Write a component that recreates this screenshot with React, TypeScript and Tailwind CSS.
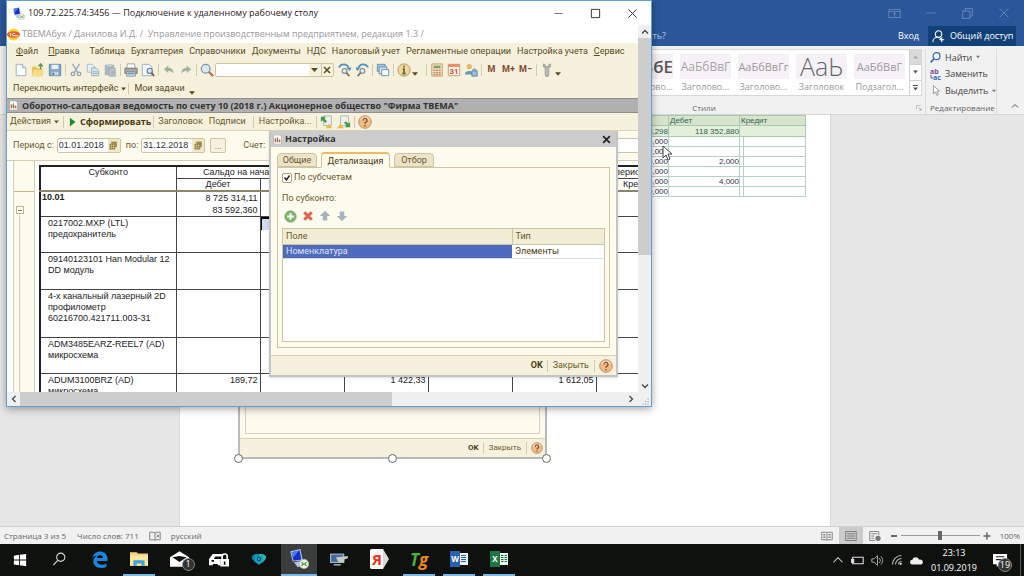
import type { ReactNode } from 'react';
import clsx from 'clsx';

const UI_FONT = "font-['Open_Sans','Noto_Sans',sans-serif]";
const ONEC_FONT = "font-['Roboto','Noto_Sans',sans-serif]";
const SHEET_FONT = "font-['Liberation_Sans',Arial,sans-serif]";

const MENU = ['Таблица', 'Бухгалтерия', 'Справочники', 'Документы', 'НДС', 'Налоговый учет', 'Регламентные операции', 'Настройка учета'];

const STYLES = [
  { sample: 'АаБбВвГ', label: 'Заголово...', look: 'text-[12px] text-[#a5a5a5]' },
  { sample: 'АаБбВвГг', label: 'Заголово...', look: 'text-[11px] text-[#999]' },
  { sample: 'АаЬ', label: 'Заголовок', look: 'text-[25px] text-[#666] font-light' },
  { sample: 'АаБбВвГ', label: 'Подзагол...', look: 'text-[11px] text-[#999]' },
];

const WORD_ROWS = [
  ['5,000', '', ''],
  ['2,000', '', ''],
  ['5,000', '2,000', ''],
  ['4,000', '', ''],
  ['6,000', '4,000', ''],
  ['0,000', '', ''],
];

const Icon = ({ children, size = 14, className }: { children: ReactNode; size?: number; className?: string }) => (
  <svg width={size} height={size} viewBox="0 0 16 16" fill="none" className={clsx('shrink-0', className)} aria-hidden="true">
    {children}
  </svg>
);

const RdpIcon = ({ size = 13 }: { size?: number }) => (
  <Icon size={size}>
    <path d="M1 2l8-2 2 9-8 1z" fill="#c8d4ea" />
    <path d="M2 2.600l6.400-1.600 1.600 7.400-6.400 1z" fill="#1430c8" />
    <path d="M2 2.600l6.400-1.600L3 7z" fill="#4a7cf0" />
    <path d="M4 10.500l6-1 3 3-6 2z" fill="#b9c4d8" />
    <circle cx="12" cy="12" r="3.800" fill="#e8efe4" stroke="#a9b3a5" strokeWidth=".5" />
    <path d="M10 13.500l1.500-1.500-1.500-1.500M14 10.500L12.500 12l1.500 1.500" stroke="#3f9b35" strokeWidth="1" />
  </Icon>
);

const OneCIcon = () => (
  <Icon size={13}>
    <circle cx="8" cy="8" r="7.500" fill="#fbd42c" />
    <path d="M0 8a8 4 0 0 1 16 0 8 4 0 0 1-16 0" fill="#ef5a28" />
    <path d="M3 7.500l1.500-1V10M10 7a2 1.600 0 1 0 0 2.500h4" stroke="#fff" strokeWidth="1.200" />
  </Icon>
);

const ReportIcon = () => (
  <Icon size={9}>
    <path d="M1 0h11l3 3v13H1z" fill="#fff" stroke="#999" />
    <path d="M3 6h3v7H3z" fill="#e2574c" />
    <path d="M7 4h2v9H7z" fill="#4da14d" />
    <path d="M10 8h3v5h-3z" fill="#e2574c" />
  </Icon>
);

const HelpIcon = ({ size = 14 }: { size?: number }) => (
  <Icon size={size}>
    <circle cx="8" cy="8" r="7.200" fill="#f4bd80" stroke="#a98b73" />
    <path d="M2.500 5.500a6 6 0 0 1 11 0z" fill="#fbe0bf" />
    <path d="M5.700 6.200a2.300 2.300 0 1 1 3.300 2C8.200 8.600 8 9 8 9.900M8 11.300V13" stroke="#8b4a2b" strokeWidth="1.600" />
  </Icon>
);

const NewIcon = () => (
  <Icon>
    <path d="M2.500 1.500h7l4 4v9h-11z" fill="#fdfefe" stroke="#8fa9bb" />
    <path d="M9.500 1.500v4h4" fill="#dce9f1" stroke="#8fa9bb" />
  </Icon>
);
const OpenIcon = () => (
  <Icon>
    <path d="M1 4h5l1 2h6v9H1z" fill="#f0c25c" />
    <path d="M1 15l2-7h12l-2 7z" fill="#f9dc8a" />
    <path d="M11 7V2M8.500 4L11 1l2.500 3" stroke="#539b4a" strokeWidth="1.500" />
  </Icon>
);
const SaveIcon = () => (
  <Icon>
    <path d="M1.500 1.500h13v13h-13z" fill="#7fa5c2" stroke="#5f87a5" />
    <path d="M4 2h8v5H4z" fill="#e6f0f6" />
    <path d="M4 10h8v4H4z" fill="#c8d8e2" />
    <path d="M5 11h2v3H5z" fill="#567a95" />
  </Icon>
);
const CutIcon = () => (
  <Icon>
    <path d="M4 1l6 10M12 1L6 11" stroke="#9fb2bf" strokeWidth="1.800" />
    <circle cx="4.500" cy="12.500" r="2" stroke="#8fa5b4" strokeWidth="1.500" />
    <circle cx="11.500" cy="12.500" r="2" stroke="#8fa5b4" strokeWidth="1.500" />
  </Icon>
);
const CopyIcon = () => (
  <Icon>
    <path d="M1.500 1.500h6l2 2v7h-8z" fill="#e8eff3" stroke="#a3b8c6" />
    <path d="M6.500 5.500h5l3 3v6h-8z" fill="#d5e2ea" stroke="#93abbb" />
    <path d="M8 10h5M8 12h5" stroke="#93abbb" />
  </Icon>
);
const PasteIcon = () => (
  <Icon>
    <path d="M2 2h11v12H2z" fill="#a9b7bd" />
    <path d="M5 1h5v3H5z" fill="#c8d2d6" />
    <path d="M7 6h7v9H7z" fill="#bfcad0" stroke="#98a9b2" />
    <path d="M9 9h4M9 11h4M9 13h4" stroke="#98a9b2" />
  </Icon>
);
const PrintIcon = () => (
  <Icon>
    <path d="M4 1h8l1 5H3z" fill="#fff" stroke="#999" />
    <path d="M1 6h14v6H1z" fill="#a6a6a6" stroke="#777" />
    <path d="M3 10h10v5H3z" fill="#e3e3e3" stroke="#888" />
    <path d="M4 12h8" stroke="#5c9ec9" strokeWidth="2" />
  </Icon>
);
const PreviewIcon = () => (
  <Icon>
    <path d="M1.500 1.500h8l3 3v10h-11z" fill="#f3f8fa" stroke="#8fa9bb" />
    <circle cx="10" cy="9" r="3" fill="#d2e6f2" stroke="#66859a" strokeWidth="1.300" />
    <path d="M12 11l3 4" stroke="#8b5a41" strokeWidth="2" />
  </Icon>
);
const UndoIcon = ({ flip }: { flip?: boolean }) => (
  <Icon size={12} className={clsx(flip && '-scale-x-100')}>
    <path d="M1 7l6-5v3c5 0 7 3 7 8-2-3-4-4-7-4v3z" fill="#a4b1a1" />
  </Icon>
);
const SearchIcon = () => (
  <Icon>
    <circle cx="6.500" cy="6.500" r="5" fill="#d7e9f5" stroke="#8296a5" strokeWidth="1.500" />
    <path d="M10 10l5 5" stroke="#b4714c" strokeWidth="2.500" />
  </Icon>
);
const FindNextIcon = ({ flip }: { flip?: boolean }) => (
  <Icon className={clsx(flip && '-scale-x-100')}>
    <path d="M1 5c3-5 9-4 11 0" stroke="#5590b8" strokeWidth="2" />
    <path d="M9.500 5h6l-2 4z" fill="#5590b8" />
    <circle cx="7.500" cy="9" r="2.800" fill="#dcebf4" stroke="#71848f" strokeWidth="1.200" />
    <path d="M9.500 11l3.500 4" stroke="#8b6656" strokeWidth="1.800" />
  </Icon>
);
const WindowsIcon = () => (
  <Icon>
    <path d="M1.500 1.500h9v8h-9z" fill="#a7c8df" stroke="#5d8aab" />
    <path d="M3.500 4.500h9v8h-9z" fill="#cfe2ee" stroke="#5d8aab" />
    <path d="M6.500 7.500h8v7h-8z" fill="#f7fbfd" stroke="#5d8aab" />
  </Icon>
);
const InfoIcon = () => (
  <Icon>
    <circle cx="8" cy="8" r="7" fill="#f3d79a" stroke="#b08a5b" />
    <path d="M8 3v2.200M6.500 7H8v5M6 12h4" stroke="#597433" strokeWidth="2" />
  </Icon>
);
const CalcIcon = () => (
  <Icon>
    <path d="M2 1h12v14H2z" fill="#f3dcb8" stroke="#c79a6c" />
    <path d="M4 3h8v3H4z" fill="#7fa374" />
    <path d="M4 8.500h8M4 11h8M4 13.300h8" stroke="#b5835c" strokeWidth="1.500" strokeDasharray="2 1" />
  </Icon>
);
const CalendarIcon = () => (
  <svg width={14} height={14} viewBox="0 0 16 16" aria-hidden="true">
    <path d="M1.500 1.500h13v13h-13z" fill="#fff8f0" stroke="#d18b70" />
    <path d="M1.500 1.500h13v3h-13z" fill="#ec8a61" />
    <text x="8" y="13" textAnchor="middle" fontSize="9" fontWeight="bold" fill="#d8452a">31</text>
  </svg>
);
const UsersIcon = () => (
  <Icon>
    <circle cx="6" cy="4" r="3" fill="#e6b968" />
    <path d="M1 13c0-5 10-5 10 0z" fill="#6998bd" />
    <path d="M9 9h6v6H9z" fill="#9dbfd8" stroke="#54809e" />
    <path d="M10.500 9V7h3v2" stroke="#54809e" />
  </Icon>
);
const WrenchIcon = () => (
  <Icon>
    <path d="M4 1v3.500l2 1.500v8a2 1.500 0 0 0 4 0V6l2-1.500V1l-2 1v2H6V2z" fill="#b9b9b4" stroke="#8d8d89" strokeWidth=".8" />
  </Icon>
);
const SettingsFileIcon = ({ flip }: { flip?: boolean }) => (
  <Icon>
    <path d="M4 1h9v11H4z" fill="#edf1e9" stroke="#a9b5a9" />
    <path d={flip ? 'M15 14H9l2-2-3-3 2-2 3 3 2-2z' : 'M1 2h6L5 4l3 3-2 2-3-3-2 2z'} fill="#42984b" />
    <path d={flip ? 'M0 15l4-5 4 5z' : 'M6 15l4-5 4 5z'} fill="#e9bb46" />
  </Icon>
);
const PickIcon = () => (
  <Icon size={9}>
    <path d="M4 1h10v10H4z" fill="#a08c4c" />
    <path d="M1 5h10v10H1z" fill="#8c7838" />
    <path d="M1 8h10M1 11.500h10M4.500 5v10M8 5v10" stroke="#d8cc9c" />
  </Icon>
);

const Sep = () => (
  <span className="flex h-3 w-1 shrink-0 justify-center">
    <span className="w-px bg-[#d3cbb0]" />
  </span>
);
const Caret = ({ className }: { className?: string }) => (
  <svg width={7} height={4} viewBox="0 0 7 4" className={clsx('shrink-0', className)} aria-hidden="true">
    <path d="M0 0h7L3.500 4z" fill="currentColor" />
  </svg>
);
const ToolButton = ({ label, children }: { label: string; children: ReactNode }) => (
  <button type="button" aria-label={label} className="flex h-4 w-[17px] shrink-0 items-center justify-center">
    {children}
  </button>
);

const DateField = ({ id, label, value }: { id: string; label: string; value: string }) => (
  <div className="flex items-center gap-[3px]">
    <label htmlFor={id}>{label}</label>
    <div className="flex h-[15px] w-16 items-center rounded-[2px] border border-[#cdc5a2] bg-white">
      <input id={id} defaultValue={value} className={clsx('h-3 w-[50px] shrink-0 pl-px text-[9px] text-[#333]', SHEET_FONT)} />
      <button type="button" aria-label="Выбрать дату" className="flex h-full flex-1 items-center justify-center bg-[#efe9cd]">
        <PickIcon />
      </button>
    </div>
  </div>
);

const WordHeader = () => (
  <header className="shrink-0 bg-[#2b579a] text-[9px] text-white">
    <div className="flex h-[26px] items-center justify-end gap-6 pr-[14px] text-[#6f8fbe]">
      <button type="button" aria-label="Параметры ленты">
        <Icon size={13}><path d="M1 3h14v10H1zM1 5.500h14M8 12V7M6 9l2-2 2 2" stroke="currentColor" /></Icon>
      </button>
      <button type="button" aria-label="Свернуть"><Icon size={12}><path d="M2 8h12" stroke="currentColor" /></Icon></button>
      <button type="button" aria-label="Восстановить"><Icon size={13}><path d="M2 5h9v9H2zM5 5V2h9v9h-3" stroke="currentColor" /></Icon></button>
      <button type="button" aria-label="Закрыть Word"><Icon size={12}><path d="M2 2l12 12M14 2L2 14" stroke="currentColor" /></Icon></button>
    </div>
    <div className="flex h-5 items-center pr-2">
      <span className="mr-[232px] ml-auto text-[#b8c8e2]">Что вы хотите сделать?</span>
      <a href="#login" className="mr-[9px]">Вход</a>
      <button type="button" className="flex h-5 w-[88px] items-center gap-[5px] bg-[#124078] pl-1 whitespace-nowrap">
        <Icon size={13}>
          <circle cx="8" cy="5" r="4" stroke="#fff" strokeWidth="1.300" />
          <path d="M1 15c0-4 3-6 6-6 2 0 3 1 4 2M12 9v6M9 12h6" stroke="#fff" strokeWidth="1.300" />
        </Icon>
        Общий доступ
      </button>
    </div>
  </header>
);

const WordRibbon = () => (
  <div className="flex h-[69px] shrink-0 justify-end border-b border-[#d5d5d5] bg-[#f1f1f1] pt-[3px] text-[9px] text-[#444]">
    <div className="flex w-[430px] flex-col">
      <div className="flex h-12 justify-end border border-[#d8d8d8] bg-white">
        <div className="flex w-[58px] flex-col items-end pt-1 pr-1 text-[#999]">
          <div className="flex h-[25px] w-[51px] items-center justify-end bg-[#f5f1f6] text-[17px] font-semibold text-[#555]">БбЕ</div>
          <span className="mt-px">Заголово...</span>
        </div>
        {STYLES.map((style, i) => (
          <button key={i} type="button" className="flex w-[58px] flex-col pt-1 pl-[3px] text-left text-[#999]">
            <span className={clsx('flex h-[25px] w-[51px] items-center justify-center bg-[#f5f1f6] leading-none', style.look)}>
              {style.sample}
            </span>
            <span className="mt-px w-[51px] text-center">{style.label}</span>
          </button>
        ))}
        <div className="flex w-3 flex-col divide-y divide-[#d0d0d0] border-l border-[#d0d0d0] text-[#555]">
          <button type="button" aria-label="Вверх" className="flex flex-1 items-center justify-center bg-[#dadada] text-[#aaa]"><Caret className="w-[5px] rotate-180" /></button>
          <button type="button" aria-label="Вниз" className="flex flex-1 items-center justify-center"><Caret className="w-[5px]" /></button>
          <button type="button" aria-label="Все стили" className="flex flex-1 flex-col items-center justify-center gap-px"><span className="h-px w-[5px] bg-[#555]" /><Caret className="w-[5px]" /></button>
        </div>
      </div>
      <div className="mt-[6px] flex items-center text-[8px] text-[#666]">
        <span className="mx-auto">Стили</span>
        <Icon size={6}><path d="M1 12V1h11M6 6l8 8M14 8v6H8" stroke="#aaa" strokeWidth="2" /></Icon>
      </div>
    </div>
    <div className="ml-[3px] flex w-[72px] flex-col border-x border-[#dcdcdc] pl-1">
      <button type="button" className="flex h-[17px] items-center gap-1 whitespace-nowrap">
        <Icon size={11}><circle cx="9.500" cy="6" r="5" stroke="#2b6cb0" strokeWidth="1.800" /><path d="M6 9.500L1 15" stroke="#2b6cb0" strokeWidth="2.500" /></Icon>
        Найти <Caret className="w-1 text-[#777]" />
      </button>
      <button type="button" className="flex h-[17px] items-center gap-1 whitespace-nowrap">
        <svg width={11} height={12} viewBox="0 0 11 12" className="shrink-0" aria-hidden="true">
          <text x="0" y="6" fontSize="7" fontWeight="bold" fill="#7a4a9e">ab</text>
          <text x="3" y="12" fontSize="7" fontWeight="bold" fill="#2b6cb0">ac</text>
          <path d="M1 7v3h2" stroke="#2b6cb0" fill="none" />
        </svg>
        Заменить
      </button>
      <button type="button" className="flex h-[17px] items-center gap-1 whitespace-nowrap">
        <Icon size={11}><path d="M5 1v12l3-3 2 5 2-1-2-5h4z" fill="#fff" stroke="#777" /></Icon>
        Выделить <Caret className="w-1 text-[#777]" />
      </button>
      <span className="mt-[3px] text-[8px] text-[#666]">Редактирование</span>
    </div>
    <button type="button" aria-label="Свернуть ленту" className="flex w-[27px] items-end justify-center pb-1 pl-2">
      <Icon size={8}><path d="M2 11l6-6 6 6" stroke="#555" strokeWidth="2" /></Icon>
    </button>
  </div>
);

const WordDocument = () => (
  <main className="relative flex-1 overflow-hidden bg-[#e6e6e6]">
    <div className="relative ml-[179px] h-full w-[652px] border-x border-[#dadada] bg-white">
      <table className={clsx('mr-6 ml-auto w-[210px] table-fixed border-collapse text-[8px] leading-[9px] text-[#35304a]', SHEET_FONT)}>
        <colgroup>
          <col />
          <col className="w-[71px]" />
          <col className="w-1" />
          <col className="w-[62px]" />
        </colgroup>
        <thead>
          <tr className="h-[10px] bg-[#d7e4cb] text-left text-[#2f6157]">
            <th className="border border-[#a7c9ac] p-0" />
            <th className="border border-[#a7c9ac] p-0 pl-px font-normal">Дебет</th>
            <th colSpan={2} className="border border-[#a7c9ac] p-0 pl-px font-normal">Кредит</th>
          </tr>
        </thead>
        <tbody className="text-right">
          <tr className="h-[11px] bg-[#e4efdb] text-[#2f6157]">
            <td className="border border-[#a7c9ac] p-0">3,298</td>
            <td className="border border-[#a7c9ac] p-0">118 352,880</td>
            <td colSpan={2} className="border border-[#a7c9ac] p-0" />
          </tr>
          {WORD_ROWS.map(([start, debit, credit], i) => (
            <tr key={i} className="h-[10px]">
              <td className="border border-[#b3d3c9] p-0">{start}</td>
              <td className="border border-[#b3d3c9] p-0">{debit}</td>
              <td className="border border-[#b3d3c9] p-0" />
              <td className="border border-[#b3d3c9] p-0">{credit}</td>
            </tr>
          ))}
        </tbody>
      </table>
      <EmbeddedPicture />
    </div>
  </main>
);

const Handle = ({ className }: { className: string }) => (
  <span className={clsx('absolute size-[9px] rounded-full border border-[#666] bg-white', className)} />
);

// picture pasted in the page, still selected
const EmbeddedPicture = () => (
  <div className={clsx('absolute top-[241px] left-[58px] flex h-[103px] w-[309px] flex-col border-2 border-[#b9b9b9] bg-[#fdfaee]', ONEC_FONT)}>
    <div className="mx-[5px] flex-1 border-x border-b border-[#d8d0b4]" />
    <div className="mt-1 flex h-[19px] items-center justify-end gap-[3px] border-t border-[#d8cdb0] bg-[#f5f1dc] pr-[2px] text-[8px] text-[#6b5a2c]">
      <b className="text-[#4a3c10]">OK</b>
      <Sep />
      <span>Закрыть</span>
      <Sep />
      <HelpIcon size={12} />
    </div>
    <Handle className="-bottom-[6px] -left-[6px]" />
    <Handle className="-bottom-[6px] left-[148px]" />
    <Handle className="-right-[6px] -bottom-[6px]" />
  </div>
);

const WordStatusBar = () => (
  <footer className="flex h-[18px] shrink-0 items-center border-t border-[#d0d0d0] bg-[#f1f1f1] pr-1 pl-1 text-[8px] text-[#666]">
    <span>Страница 3 из 5</span>
    <span className="ml-[11px]">Число слов: 711</span>
    <Icon size={12} className="ml-[10px]"><path d="M1 3h6l1 1v10l-1-1H1zM8 4l1-1h6v10H9l-1 1M10 6l4 4M14 6l-4 4" stroke="#666" /></Icon>
    <span className="ml-[10px]">русский</span>
    <div className="ml-auto flex h-full items-center">
      <button type="button" aria-label="Режим чтения" className="flex w-6 justify-center">
        <Icon size={12}><path d="M1 3h6l1 1v10l-1-1H1zM8 4l1-1h6v10H9l-1 1M3 6h3M3 8h3M3 10h3M10 6h3M10 8h3M10 10h3" stroke="#666" /></Icon>
      </button>
      <button type="button" aria-label="Разметка страницы" className="flex h-full w-6 items-center justify-center bg-[#cbcbcb]">
        <Icon size={12}><path d="M1 2h14v12H1zM3 5h10M3 8h10M3 11h10" stroke="#666" /></Icon>
      </button>
      <button type="button" aria-label="Веб-документ" className="flex w-6 justify-center">
        <Icon size={12}><path d="M1 2h12v5M1 2v12h7M3 5h8M3 8h4M3 11h4" stroke="#666" /><circle cx="12" cy="11" r="3.500" fill="#777" /></Icon>
      </button>
      <button type="button" aria-label="Уменьшить" className="ml-[3px] flex w-[8px] justify-center"><span className="h-[2px] w-[6px] bg-[#666]" /></button>
      <div className="relative mx-[3px] h-[9px] w-[79px]">
        <span className="absolute inset-x-0 top-1 h-px bg-[#999]" />
        <input type="range" aria-label="Масштаб" defaultValue={50} className="absolute inset-0 w-full appearance-none bg-transparent [&::-webkit-slider-thumb]:h-[9px] [&::-webkit-slider-thumb]:w-[4px] [&::-webkit-slider-thumb]:appearance-none [&::-webkit-slider-thumb]:bg-[#666]" />
      </div>
      <button type="button" aria-label="Увеличить" className="mr-[9px]"><Icon size={8}><path d="M8 1v14M1 8h14" stroke="#666" strokeWidth="3" /></Icon></button>
      <span>100%</span>
    </div>
  </footer>
);

const OneCMenus = () => (
  <div className={clsx('bg-[#f5f1dd] text-[9px] text-[#5a4b1c]', ONEC_FONT)}>
    <nav className="flex h-[17px] items-center gap-[6px] pl-[9px] whitespace-nowrap">
      <button type="button"><u>Ф</u>айл</button>
      <button type="button" className="mx-1"><u>П</u>равка</button>
      {MENU.map((item) => (
        <button key={item} type="button">{item}</button>
      ))}
      <button type="button"><u>С</u>ервис</button>
    </nav>
    <div className="flex h-[19px] items-center pl-[5px]">
      <ToolButton label="Новый"><NewIcon /></ToolButton>
      <ToolButton label="Открыть"><OpenIcon /></ToolButton>
      <ToolButton label="Сохранить"><SaveIcon /></ToolButton>
      <Sep />
      <ToolButton label="Вырезать"><CutIcon /></ToolButton>
      <ToolButton label="Копировать"><CopyIcon /></ToolButton>
      <ToolButton label="Вставить"><PasteIcon /></ToolButton>
      <Sep />
      <ToolButton label="Печать"><PrintIcon /></ToolButton>
      <ToolButton label="Просмотр"><PreviewIcon /></ToolButton>
      <Sep />
      <ToolButton label="Отменить"><UndoIcon /></ToolButton>
      <ToolButton label="Вернуть"><UndoIcon flip /></ToolButton>
      <Sep />
      <ToolButton label="Найти"><SearchIcon /></ToolButton>
      <div className="mr-[2px] flex h-[14px] w-[119px] items-center rounded-[2px] border border-[#cdc5a2] bg-white">
        <input aria-label="Поиск" className="h-3 w-[93px] shrink-0" />
        <button type="button" aria-label="История поиска" className="flex h-full flex-1 items-center justify-center border-r border-[#cdc5a2] bg-[#f5f1dd]"><Caret /></button>
        <button type="button" aria-label="Очистить" className="flex h-full flex-1 items-center justify-center bg-[#f5f1dd]">
          <Icon size={8}><path d="M2 2l12 12M14 2L2 14" stroke="#5a4b1c" strokeWidth="3" /></Icon>
        </button>
      </div>
      <ToolButton label="Найти далее"><FindNextIcon /></ToolButton>
      <ToolButton label="Найти ранее"><FindNextIcon flip /></ToolButton>
      <Sep />
      <ToolButton label="Окна"><WindowsIcon /></ToolButton>
      <Sep />
      <ToolButton label="Справка"><InfoIcon /></ToolButton>
      <Caret className="mt-2 mr-[6px] w-[6px]" />
      <Sep />
      <ToolButton label="Калькулятор"><CalcIcon /></ToolButton>
      <ToolButton label="Календарь"><CalendarIcon /></ToolButton>
      <ToolButton label="Пользователи"><UsersIcon /></ToolButton>
      <Sep />
      <span className="flex text-center font-bold text-[#84492f]">
        <button type="button" className="w-[17px]">M</button>
        <button type="button" className="w-[17px]">M+</button>
        <button type="button" className="w-[17px]">M−</button>
      </span>
      <Sep />
      <ToolButton label="Сервис"><WrenchIcon /></ToolButton>
      <Caret className="mt-2 w-[6px]" />
    </div>
    <div className="flex h-[19px] items-center pl-[6px]">
      <button type="button" className="flex items-center gap-[3px]">Переключить интерфейс <Caret className="w-[5px]" /></button>
      <Sep />
      <button type="button" className="ml-1">Мои задачи</button>
      <Caret className="mt-2 ml-1 w-[6px]" />
    </div>
  </div>
);

const ReportToolbar = () => (
  <div className={clsx('flex h-[18px] items-center border-b border-[#ddd5b5] bg-[#f5f1dd] pl-[3px] text-[9px] text-[#6b5a2c]', ONEC_FONT)}>
    <button type="button" className="flex items-center gap-[3px]">Действия <Caret className="w-[5px]" /></button>
    <span className="ml-[2px] flex"><Sep /></span>
    <button type="button" className={clsx('ml-[3px] flex items-center gap-[2px] font-bold text-[#4a3c10]', UI_FONT)}>
      <Icon size={10}><path d="M3 1l9 7-9 7z" fill="#1a8c2a" /></Icon>
      Сформировать
    </button>
    <Sep />
    <button type="button" className="ml-[3px]">Заголовок</button>
    <button type="button" className="mx-[6px]">Подписи</button>
    <Sep />
    <button type="button" className="mx-[3px]">Настройка...</button>
    <Sep />
    <ToolButton label="Загрузить настройку"><SettingsFileIcon /></ToolButton>
    <ToolButton label="Сохранить настройку"><SettingsFileIcon flip /></ToolButton>
    <Sep />
    <ToolButton label="Помощь"><HelpIcon /></ToolButton>
  </div>
);

const HEAD = 'border border-[#444] p-0 font-normal';
const CELL = 'border border-[#444] p-0 align-top';

const Name = ({ children }: { children: ReactNode }) => <td className={clsx(CELL, 'pt-px pl-[7px] whitespace-nowrap')}>{children}</td>;
const Amount = ({ children }: { children: ReactNode }) => <td className={clsx(CELL, 'pt-px pr-[2px] text-right')}>{children}</td>;
const Blank = ({ count }: { count: number }) => <>{Array.from({ length: count }, (_, i) => <td key={i} className={CELL} />)}</>;

const ReportSheet = () => (
  <div className={clsx('flex min-h-0 flex-1 border-t border-[#d6cfae] bg-white text-[9px] leading-[11px] text-[#222]', SHEET_FONT)}>
    <div className="relative ml-[6px] w-[22px] shrink-0 border-x border-[#d6cfae] bg-[#fdfaee]">
      <span className="absolute inset-x-0 top-[30px] h-px bg-[#bdb58c]" />
      <span className="absolute top-[50px] bottom-0 left-[5px] w-px bg-[#d6cfae]" />
      <button type="button" aria-label="Свернуть группу" className="absolute top-[45px] left-[2px] flex size-2 items-center justify-center border border-[#bdb58c] bg-white">
        <span className="h-px w-1 bg-[#8c7838]" />
      </button>
    </div>
    <div className="flex-1 overflow-hidden pt-1 pl-1">
      <table className="w-[640px] table-fixed border-collapse border-2 border-[#222]">
        <colgroup>
          <col className="w-[136px]" />
          {Array.from({ length: 6 }, (_, i) => <col key={i} className="w-[84px]" />)}
        </colgroup>
        <thead>
          <tr className="h-[12px]">
            <th rowSpan={2} className={clsx(HEAD, 'align-top')}>Субконто</th>
            <th colSpan={2} className={HEAD}>Сальдо на начало периода</th>
            <th colSpan={2} className={HEAD}>Оборот за период</th>
            <th colSpan={2} className={HEAD}>Сальдо на конец периода</th>
          </tr>
          <tr className="h-[12px] border-b-2 border-[#8a866c]">
            {['Дебет', 'Кредит', 'Дебет', 'Кредит', 'Дебет', 'Кредит'].map((title, i) => (
              <th key={i} className={HEAD}>{title}</th>
            ))}
          </tr>
        </thead>
        <tbody>
          <tr className="h-[25px]">
            <td className={clsx(CELL, 'pl-px font-bold')}>10.01</td>
            <td className={clsx(CELL, 'pr-[2px] text-right leading-[12px]')}>8 725 314,11<br />83 592,360</td>
            <Blank count={5} />
          </tr>
          <tr className="h-[36px]">
            <Name>0217002.MXP (LTL)<br />предохранитель</Name>
            <td className={CELL} />
            <td className={clsx(CELL, 'align-bottom')}><div className="h-[13px] border-t-2 border-l border-black bg-[#d3daf0]" /></td>
            <Blank count={4} />
          </tr>
          <tr className="h-[37px]">
            <Name>09140123101 Han Modular 12<br />DD модуль</Name>
            <Blank count={6} />
          </tr>
          <tr className="h-[48px]">
            <Name>4-х канальный лазерный 2D<br />профилометр<br />60216700.421711.003-31</Name>
            <Blank count={6} />
          </tr>
          <tr className="h-[36px]">
            <Name>ADM3485EARZ-REEL7 (AD)<br />микросхема</Name>
            <Blank count={6} />
          </tr>
          <tr className="h-[36px]">
            <Name>ADUM3100BRZ (AD)<br />микросхема</Name>
            <Amount>189,72</Amount>
            <Blank count={1} />
            <Amount>1 422,33</Amount>
            <Blank count={1} />
            <Amount>1 612,05</Amount>
            <Blank count={1} />
          </tr>
        </tbody>
      </table>
    </div>
  </div>
);

const SettingsDialog = () => (
  <section
    role="dialog"
    aria-label="Настройка"
    className={clsx('absolute top-[130px] left-[262px] flex h-[246px] w-[349px] flex-col border-2 border-t-0 border-[#c4c4c4] bg-[#fdfaee] text-[9px] text-[#6b5a2c] shadow-sm', ONEC_FONT)}
  >
    <div className={clsx('flex h-4 items-center gap-[3px] bg-[#cbcbcb] px-[2px] font-bold text-[#333]', UI_FONT)}>
      <ReportIcon />
      Настройка
      <button type="button" aria-label="Закрыть окно" className="mr-[3px] ml-auto">
        <Icon size={9}><path d="M2 2l12 12M14 2L2 14" stroke="#222" strokeWidth="3" /></Icon>
      </button>
    </div>
    <div role="tablist" className="mt-[5px] flex h-[15px] items-end gap-1 pl-[6px]">
      <button type="button" role="tab" className="h-[14px] w-10 rounded-t border border-[#cdc5a2] bg-[#ebe4c8] leading-3">Общие</button>
      <button type="button" role="tab" aria-selected className="z-10 -mb-px h-4 w-[69px] rounded-t border border-t-2 border-[#cdc5a2] border-t-[#efb95e] border-b-[#fdfaee] bg-[#fdfaee] leading-3 text-[#4a3c10]">Детализация</button>
      <button type="button" role="tab" className="h-[14px] w-10 rounded-t border border-[#cdc5a2] bg-[#ebe4c8] leading-3">Отбор</button>
    </div>
    <div className="mx-[6px] mb-[7px] flex min-h-0 flex-1 flex-col border border-[#cdc5a2] px-1 pt-1 pb-[5px]">
      <label className="flex h-3 items-center gap-[2px]">
        <span className="relative flex size-[10px]">
          <input type="checkbox" defaultChecked className="peer size-[10px] appearance-none rounded-[2px] border border-[#a99f78] bg-white" />
          <Icon size={10} className="pointer-events-none absolute inset-0 hidden peer-checked:block"><path d="M4 7l3 4 5-7" stroke="#222" strokeWidth="2.500" /></Icon>
        </span>
        По субсчетам
      </label>
      <span className="mt-2 h-3 leading-3">По субконто:</span>
      <div className="my-1 flex h-4 items-center">
        <ToolButton label="Добавить"><Icon size={13}><circle cx="8" cy="8" r="7" fill="#78b865" stroke="#8c9c84" /><path d="M8 4v8M4 8h8" stroke="#fff" strokeWidth="2.500" /></Icon></ToolButton>
        <ToolButton label="Удалить"><Icon size={12}><path d="M3 3l10 10M13 3L3 13" stroke="#e5604c" strokeWidth="4" /></Icon></ToolButton>
        <ToolButton label="Выше"><Icon size={12}><path d="M8 1l7 7h-4v6H5V8H1z" fill="#a5b4bd" /></Icon></ToolButton>
        <ToolButton label="Ниже"><Icon size={12}><path d="M8 15l7-7h-4V2H5v6H1z" fill="#a5b4bd" /></Icon></ToolButton>
      </div>
      <div className="flex-1 border border-[#cdc5a2] bg-white">
        <table className="w-full table-fixed border-collapse text-left">
          <thead>
            <tr className="h-[15px] bg-[#f1ecd4]">
              <th className="border-r border-b border-[#cdc5a2] p-0 pl-[3px] font-normal">Поле</th>
              <th className="w-[92px] border-b border-[#cdc5a2] p-0 pl-[3px] font-normal">Тип</th>
            </tr>
          </thead>
          <tbody>
            <tr className="h-[14px] leading-[12px]">
              <td className="border-b border-[#d8dbe8] bg-[#4f6bbd] p-0 pl-[3px] text-[#dfe5f8]">Номенклатура</td>
              <td className="border-b border-[#d8dbe8] p-0 pl-[3px] text-[#4a3c10]">Элементы</td>
            </tr>
          </tbody>
        </table>
      </div>
    </div>
    <div className="flex h-5 shrink-0 items-center justify-end gap-[3px] border-t border-[#d8cdb0] bg-[#f5f1dc] pr-[3px]">
      <button type="button" className="font-bold text-[#4a3c10]">OK</button>
      <Sep />
      <button type="button">Закрыть</button>
      <Sep />
      <button type="button" aria-label="Помощь по окну"><HelpIcon /></button>
    </div>
  </section>
);

const RemoteWindow = () => (
  <section className="absolute top-0 left-[6px] flex h-[407px] w-[646px] flex-col border border-[#5fa0d4] bg-white shadow-[0_2px_8px_rgba(0,0,0,0.35)]">
    <div className="flex h-6 shrink-0 items-center pl-[5px] text-[9px] text-[#222]">
      <RdpIcon />
      <span className="ml-[3px]">109.72.225.74:3456 — Подключение к удаленному рабочему столу</span>
      <div className="ml-auto flex">
        <button type="button" aria-label="Свернуть окно" className="flex w-[37px] justify-center"><Icon size={11}><path d="M2 8h12" stroke="#777" strokeWidth="1.500" /></Icon></button>
        <button type="button" aria-label="Развернуть окно" className="flex w-[37px] justify-center"><Icon size={11}><path d="M2 2h12v12H2z" stroke="#333" strokeWidth="1.400" /></Icon></button>
        <button type="button" aria-label="Закрыть удаленный стол" className="flex w-[37px] justify-center"><Icon size={11}><path d="M2 2l12 12M14 2L2 14" stroke="#333" strokeWidth="1.400" /></Icon></button>
      </div>
    </div>
    <div className="flex min-h-0 flex-1">
      <div className="flex min-w-0 flex-1 flex-col">
        <div className="flex h-[18px] shrink-0 items-center gap-[2px] text-[9px] text-[#999]">
          <OneCIcon />
          <span className="whitespace-pre">ТВЕМАбух / Данилова И.Д. /  Управление производственным предприятием, редакция 1.3 /</span>
        </div>
        <OneCMenus />
        <div className="flex h-[15px] shrink-0 items-center gap-1 border-y border-[#8f8f8f] bg-[#b0b0b0] pl-[2px] text-[9px] font-bold text-[#333]">
          <ReportIcon />
          Оборотно-сальдовая ведомость по счету 10 (2018 г.) Акционерное общество "Фирма ТВЕМА"
        </div>
        <ReportToolbar />
        <div className={clsx('flex h-[29px] shrink-0 items-center gap-[5px] bg-[#fdfaee] pl-[6px] text-[9px] text-[#6b5a2c]', ONEC_FONT)}>
          <DateField id="from" label="Период с:" value="01.01.2018" />
          <DateField id="to" label="по:" value="31.12.2018" />
          <button type="button" className="h-[15px] w-4 rounded-[2px] border border-[#cdc5a2] bg-[#f5f1dd] leading-3">...</button>
          <label htmlFor="account" className="ml-3">Счет:</label>
          <input id="account" className="h-[15px] min-w-0 flex-1 rounded-l-[2px] border border-r-0 border-[#cdc5a2] bg-white" />
        </div>
        <ReportSheet />
      </div>
      <div className="flex w-[13px] shrink-0 flex-col items-center bg-[#f0f0f0]">
        <button type="button" aria-label="Прокрутить вверх" className="flex h-[13px] items-center"><Icon size={8}><path d="M2 11l6-6 6 6" stroke="#444" strokeWidth="2.500" /></Icon></button>
        <div className="h-[217px] w-full bg-[#cdcdcd]" />
        <button type="button" aria-label="Прокрутить вниз" className="mt-auto flex h-[13px] items-center"><Icon size={8}><path d="M2 5l6 6 6-6" stroke="#444" strokeWidth="2.500" /></Icon></button>
      </div>
    </div>
    <div className="flex h-[14px] shrink-0 items-center bg-[#f0f0f0] pr-[1px]">
      <button type="button" aria-label="Прокрутить влево" className="flex w-[13px] justify-center"><Icon size={8}><path d="M11 2L5 8l6 6" stroke="#444" strokeWidth="2.500" /></Icon></button>
      <div className="h-full w-[372px] bg-[#cdcdcd]" />
      <button type="button" aria-label="Прокрутить вправо" className="ml-auto flex w-[13px] justify-center"><Icon size={8}><path d="M5 2l6 6-6 6" stroke="#444" strokeWidth="2.500" /></Icon></button>
      <Icon size={10} className="ml-[3px] self-end"><path d="M12 4h2v2h-2zM12 8h2v2h-2zM8 8h2v2H8zM12 12h2v2h-2zM8 12h2v2H8zM4 12h2v2H4z" fill="#aaa" /></Icon>
    </div>
    <SettingsDialog />
  </section>
);

const TaskButton = ({ label, open, active, children }: { label: string; open?: boolean; active?: boolean; children: ReactNode }) => (
  <button type="button" aria-label={label} className="flex w-10 shrink-0 justify-center">
    <span className={clsx('flex h-full items-center justify-center border-b-2', active ? 'w-9 bg-[#3a3d3b]' : 'w-8', open || active ? 'border-[#76b9ed]' : 'border-transparent')}>
      {children}
    </span>
  </button>
);

const Taskbar = () => (
  <div className="flex h-8 shrink-0 bg-[#0f110f] text-white">
    <button type="button" aria-label="Пуск" className="flex w-[39px] shrink-0 items-center justify-center">
      <Icon><path d="M1 3l6-1v5.500H1zM8 2l7-1v6.500H8zM1 8.500h6V14l-6-1zM8 8.500h7V15l-7-1z" fill="#fff" /></Icon>
    </button>
    <TaskButton label="Поиск Windows"><Icon><circle cx="10" cy="6" r="4.700" stroke="#ddd" strokeWidth="1.200" /><path d="M6.500 9.500L1.500 15" stroke="#ddd" strokeWidth="1.200" /></Icon></TaskButton>
    <TaskButton label="Edge">
      <Icon size={17}><path d="M1 7C2 3 5 .5 8.700.5 13 .5 15.500 4 15.500 7.500V9.500H5.500c.2 2.500 2.500 3.500 4.700 3.500 1.800 0 3.300-.5 4.300-1.200v3c-1.300.8-3 1.200-5 1.200C5 16 2.200 13.300 2.200 9.900c0-2.600 1.500-4.700 3.800-5.900C3.800 4.300 2 5.400 1 7zm4.600-.3h5.600C11.200 5 10.200 4 8.500 4S5.800 5.200 5.600 6.700z" fill="#1b86dc" /></Icon>
    </TaskButton>
    <TaskButton label="Проводник" open>
      <Icon size={18}><path d="M0 2h6l1 1h9v11H0z" fill="#f5d478" /><path d="M0 5h16v9H0z" fill="#fbe7a0" /><path d="M3 14V9h10v5h-3v-2H6v2z" fill="#3da4e0" /></Icon>
    </TaskButton>
    <TaskButton label="Почта">
      <span className="relative">
        <Icon size={19}><path d="M0 6l8-5 8 5v8H0z" fill="#fff" /><path d="M2 6l6 4 6-4-6-1z" fill="#111" /></Icon>
        <span className="absolute -right-[6px] -bottom-[2px] flex size-[13px] items-center justify-center rounded-full border border-[#888] bg-[#333] text-[9px]">1</span>
      </span>
    </TaskButton>
    <TaskButton label="Автомобиль">
      <Icon size={20}><path d="M3 4h9l-1 2H5L4 8h5v5H7v-1H3v1H0V8z" fill="#fff" /><path d="M9 8h7v6H9z" fill="#fff" /><path d="M10.500 8V5.500c0-2 4-2 4 0V8" stroke="#fff" strokeWidth="1.300" /><path d="M12.500 10v2.500M2 9.500h2" stroke="#111" strokeWidth="1.300" /></Icon>
    </TaskButton>
    <TaskButton label="Сердце">
      <Icon size={16}><path d="M1 5l3-2h4v10C4 12 0 8 1 5z" fill="#0a86a8" /><path d="M15 5l-3-2H8v10c4-1 8-5 7-8z" fill="#25b99b" /><path d="M4 4l4 2 4-2v6l-4 4-4-4z" fill="#12a0c9" /><circle cx="8" cy="8" r="1.800" stroke="#06425b" /></Icon>
    </TaskButton>
    <TaskButton label="Удаленный рабочий стол" active><RdpIcon size={20} /></TaskButton>
    <TaskButton label="Монитор">
      <Icon size={19}><path d="M0 3h12v8H0z" fill="#9fb4c9" /><path d="M1 4h10v6H1z" fill="#426a9c" /><path d="M3 12h6v1H3zM5 6l10-1v2l-3 1v2H7z" fill="#c9c9c4" /></Icon>
    </TaskButton>
    <TaskButton label="Яндекс">
      <svg width={19} height={20} viewBox="0 0 19 20" aria-hidden="true">
        <path d="M0 2q0-2 2-2h11l6 10-6 10H2q-2 0-2-2z" fill="#d9d9d9" />
        <path d="M0 2q0-2 2-2h11v20H2q-2 0-2-2z" fill="#fafafa" />
        <text x="7" y="16" textAnchor="middle" fontSize="15" fontWeight="bold" fill="#e8301c">Я</text>
      </svg>
    </TaskButton>
    <TaskButton label="Tg" open>
      <span className="text-[17px] leading-none font-bold italic"><span className="text-[#4fae3c]">T</span><span className="text-[#f08a1c]">g</span></span>
    </TaskButton>
    <TaskButton label="Word" open>
      <span className="flex items-center">
        <span className="flex h-4 w-[10px] items-center justify-center bg-[#2b5fb0] text-[8px] font-bold">W</span>
        <svg width={8} height={12} viewBox="0 0 8 12" aria-hidden="true"><path d="M0 0h8v12H0z" fill="#e9f0fa" /><path d="M1 2.500h5M1 4.500h5M1 6.500h5M1 8.500h5" stroke="#2b5fb0" /></svg>
      </span>
    </TaskButton>
    <TaskButton label="Excel" open>
      <span className="flex items-center">
        <span className="flex h-4 w-[10px] items-center justify-center bg-[#1e7446] text-[8px] font-bold">X</span>
        <svg width={8} height={12} viewBox="0 0 8 12" aria-hidden="true"><path d="M0 0h8v12H0z" fill="#e5f3ea" /><path d="M1 2.500h6M1 4.500h6M1 6.500h6M1 8.500h6" stroke="#1e7446" strokeDasharray="2.500 1" /></svg>
      </span>
    </TaskButton>
    <div className="ml-auto flex items-center text-[9px]">
      <span className="flex items-center gap-[7px]">
        <Icon size={12}><path d="M2 11l6-6 6 6" stroke="#ddd" strokeWidth="1.400" /></Icon>
        <Icon size={13}><path d="M2 4h13v8H2z" stroke="#ddd" strokeWidth="1.300" /><path d="M0 6h4v5H0z" fill="#ddd" /></Icon>
        <Icon size={13}><path d="M1 6h3l4-4v12l-4-4H1zM10 5c2 2 2 4 0 6M12 3c3 3 3 7 0 10" stroke="#ccc" /></Icon>
        <Icon size={12}><path d="M2 14A12 12 0 0 1 14 2M6 14a8 8 0 0 1 8-8M10 14a4 4 0 0 1 4-4" stroke="#bbb" strokeWidth="1.400" /><circle cx="13" cy="13" r="1.500" fill="#ddd" /></Icon>
        <Icon size={13}><path d="M3 13a3 3 0 0 1 0-6c1-4 7-4 8 0 6-1 6 6 2 6z" fill="#eee" /></Icon>
      </span>
      <span className="ml-1 flex w-[54px] flex-col text-center leading-[15px]">
        <span>23:13</span>
        <span>01.09.2019</span>
      </span>
      <button type="button" aria-label="Уведомления" className="relative mr-3 ml-3 flex">
        <Icon size={15}><path d="M0 1h15v11H7l-3 3v-3H0z" fill="#fff" /><path d="M3 4h9M3 7h9" stroke="#222" strokeWidth="1.200" /></Icon>
        <span className="absolute top-[5px] left-[5px] flex size-[14px] items-center justify-center rounded-full border border-[#888] bg-[#333] text-[9px]">19</span>
      </button>
      <span className="mr-[3px] h-8 w-px bg-[#555]" />
    </div>
  </div>
);

export default function App() {
  return (
    <div className={clsx('relative flex h-screen flex-col overflow-hidden', UI_FONT)}>
      <WordHeader />
      <WordRibbon />
      <WordDocument />
      <WordStatusBar />
      <Taskbar />
      <RemoteWindow />
      <svg width={11} height={16} viewBox="0 0 11 16" className="absolute top-[145px] left-[662px]" aria-hidden="true">
        <path d="M1 1v12l3-3 2 5 2-1-2-5h4z" fill="#fff" stroke="#444" />
      </svg>
    </div>
  );
}
